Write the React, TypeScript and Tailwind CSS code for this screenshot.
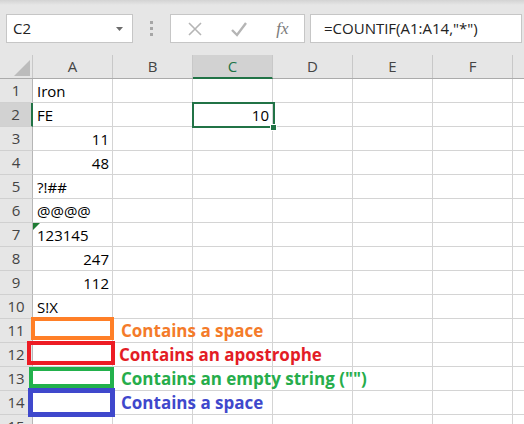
import React from "react";

const COLS = ["A", "B", "C", "D", "E", "F"];

type Cell = { text?: string; align?: "left" | "right"; label?: { text: string; color: string } };

const data: Record<number, Record<string, Cell>> = {
  1: { A: { text: "Iron" } },
  2: { A: { text: "FE" }, C: { text: "10", align: "right" } },
  3: { A: { text: "11", align: "right" } },
  4: { A: { text: "48", align: "right" } },
  5: { A: { text: "?!##" } },
  6: { A: { text: "@@@@" } },
  7: { A: { text: "123145" } },
  8: { A: { text: "247", align: "right" } },
  9: { A: { text: "112", align: "right" } },
  10: { A: { text: "S!X" } },
  11: { B: { label: { text: "Contains a space", color: "left-[8px] text-[#f47b2a]" } } },
  12: { B: { label: { text: "Contains an apostrophe", color: "left-[6px] text-[#e31c25]" } } },
  13: { B: { label: { text: "Contains an empty string (\"\")", color: "left-[8px] text-[#26ad4b]" } } },
  14: { B: { label: { text: "Contains a space", color: "left-[8px] text-[#3f48cc]" } } },
};

export default function App() {
  const rows = Array.from({ length: 15 }, (_, i) => i + 1);
  return (
    <div className="relative w-[524px] h-[424px] overflow-hidden bg-white font-['Open_Sans',sans-serif] text-[15px] text-black">
      {/* Toolbar */}
      <div className="h-[55px] bg-[#e6e6e6] flex flex-col">
        <div className="h-[5px] bg-gradient-to-b from-[#d3d3d3] to-[#e6e6e6]" />
        <div className="mt-[9px] flex items-stretch h-[29px]">
          <div className="ml-[6px] w-[127px] bg-white border border-[#c6c6c6] flex items-center justify-between pl-[6px] pr-[9px]">
            <span className="text-[#222] leading-none">C2</span>
            <svg width="7" height="4" viewBox="0 0 7 4">
              <polygon points="0,0 7,0 3.5,4" fill="#6b6b6b" />
            </svg>
          </div>
          <div className="w-[37px] flex flex-col items-center justify-center gap-[3px]">
            <div className="w-[3px] h-[3px] bg-[#a6a6a6]" />
            <div className="w-[3px] h-[3px] bg-[#a6a6a6]" />
            <div className="w-[3px] h-[3px] bg-[#a6a6a6]" />
          </div>
          <div className="w-[135px] bg-white border border-[#c6c6c6] flex items-center">
            <div className="w-[44px] flex justify-center ml-[2px]">
              <svg width="16" height="16" viewBox="0 0 16 16">
                <path d="M2 2 L14 14 M14 2 L2 14" stroke="#b5b5b5" strokeWidth="1.6" fill="none" />
              </svg>
            </div>
            <div className="w-[44px] flex justify-center">
              <svg width="18" height="16" viewBox="0 0 18 16">
                <path d="M2 9 L7 14 L16 2" stroke="#b5b5b5" strokeWidth="2.4" fill="none" />
              </svg>
            </div>
            <div className="flex-1 flex justify-center">
              <span className="font-['Liberation_Serif',serif] italic text-[17px] text-[#7a7a7a] leading-none">
                fx
              </span>
            </div>
          </div>
          <div className="ml-[5px] w-[212px] bg-white border border-[#c6c6c6] flex items-center pl-[13px]">
            <span className="text-[#222] leading-none whitespace-nowrap">=COUNTIF(A1:A14,"*")</span>
          </div>
        </div>
      </div>

      {/* Column header row */}
      <div className="flex h-[24px] bg-[#e6e6e6] border-b border-[#ababab]">
        <div className="w-[33px] shrink-0 relative border-r border-[#c8c8c8]">
          <svg className="absolute left-[14px] top-[5px]" width="16" height="16" viewBox="0 0 16 16">
            <polygon points="16,0 16,16 0,16" fill="#bcbcbc" />
          </svg>
        </div>
        {COLS.map((c) =>
          c === "C" ? (
            <div
              key={c}
              className="w-[80px] shrink-0 flex items-center justify-center bg-[#d2d2d2] border-r border-[#c8c8c8] border-b-2 border-b-[#217346] text-[#217346] -mb-px"
            >
              {c}
            </div>
          ) : (
            <div
              key={c}
              className="w-[80px] shrink-0 flex items-center justify-center border-r border-[#c8c8c8] text-[#444]"
            >
              {c}
            </div>
          )
        )}
        <div className="flex-1" />
      </div>

      {/* Data rows */}
      {rows.map((r) => (
        <div key={r} className="flex h-[24px]">
          {r === 2 ? (
            <div className="w-[33px] shrink-0 flex items-center justify-center bg-[#d2d2d2] border-b border-[#d0d0d0] border-r-2 border-r-[#217346] text-[#444]">
              {r}
            </div>
          ) : (
            <div className="w-[33px] shrink-0 flex items-center justify-center bg-[#e6e6e6] border-b border-[#d0d0d0] border-r border-r-[#b6b6b6] text-[#444]">
              {r}
            </div>
          )}
          {COLS.map((c) => {
            const cell = data[r]?.[c];
            return (
              <div
                key={c}
                className={
                  "w-[80px] shrink-0 border-r border-b border-[#d4d4d4] flex items-center overflow-visible relative " +
                  (cell?.align === "right" ? "justify-end pr-[3px]" : "justify-start pl-[4px]")
                }
              >
                {cell?.text && <span className="pt-[1px] whitespace-nowrap">{cell.text}</span>}
                {cell?.label && (
                  <span
                    className={
                      "absolute inset-y-0 flex items-center text-[17px] font-bold whitespace-nowrap z-10 " +
                      cell.label.color
                    }
                  >
                    {cell.label.text}
                  </span>
                )}
                {r === 7 && c === "A" && (
                  <svg className="absolute left-0 top-0" width="7" height="7" viewBox="0 0 7 7">
                    <polygon points="0,0 7,0 0,7" fill="#1e7b34" />
                  </svg>
                )}
              </div>
            );
          })}
          <div className="flex-1 border-b border-[#d4d4d4]" />
        </div>
      ))}

      {/* Selected cell C2 */}
      <div className="absolute left-[192px] top-[102px] w-[83px] h-[26px] border-2 border-[#217346]" />
      <div className="absolute left-[270px] top-[124px] w-[7px] h-[7px] bg-[#217346] border border-white" />

      {/* Highlight boxes */}
      <div className="absolute left-[31px] top-[317px] w-[83px] h-[23px] border-4 border-[#ff7f27]" />
      <div className="absolute left-[27px] top-[341px] w-[88px] h-[24px] border-4 border-[#ed1c24]" />
      <div className="absolute left-[29px] top-[367px] w-[85px] h-[21px] border-4 border-[#22b14c]" />
      <div className="absolute left-[28px] top-[388px] w-[87px] h-[29px] border-[5px] border-[#3f48cc]" />
    </div>
  );
}
